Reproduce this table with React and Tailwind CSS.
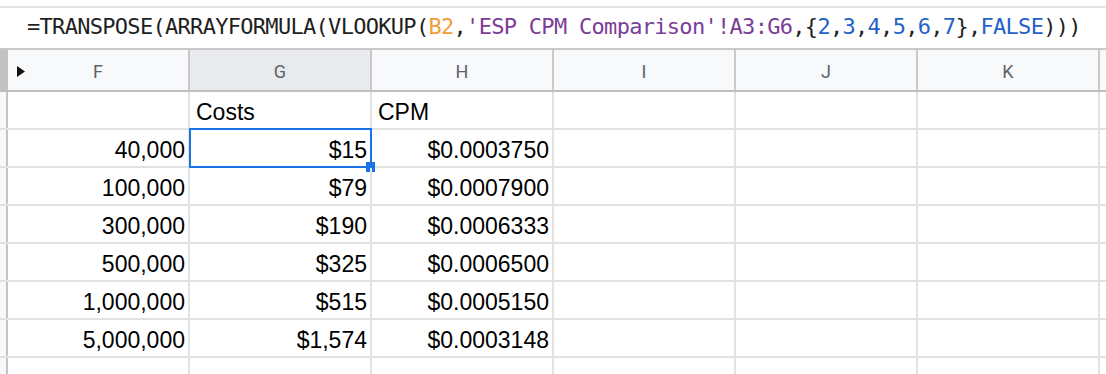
const cols = ["F", "G", "H", "I", "J", "K"];

const rows = [
  ["", "Costs", "CPM"],
  ["40,000", "$15", "$0.0003750"],
  ["100,000", "$79", "$0.0007900"],
  ["300,000", "$190", "$0.0006333"],
  ["500,000", "$325", "$0.0006500"],
  ["1,000,000", "$515", "$0.0005150"],
  ["5,000,000", "$1,574", "$0.0003148"],
  ["", "", ""]
];

// formula pieces: [text, color]
const formula = [
  ["=TRANSPOSE(ARRAYFORMULA(VLOOKUP(", "text-[#1f1f1f]"],
  ["B2", "text-[#f29d3b]"],
  [",", "text-[#1f1f1f]"],
  ["'ESP CPM Comparison'!A3:G6", "text-[#7b3d98]"],
  [",{", "text-[#1f1f1f]"],
  ["2", "text-[#2461c8]"],
  [",", "text-[#1f1f1f]"],
  ["3", "text-[#2461c8]"],
  [",", "text-[#1f1f1f]"],
  ["4", "text-[#2461c8]"],
  [",", "text-[#1f1f1f]"],
  ["5", "text-[#2461c8]"],
  [",", "text-[#1f1f1f]"],
  ["6", "text-[#2461c8]"],
  [",", "text-[#1f1f1f]"],
  ["7", "text-[#2461c8]"],
  ["},", "text-[#1f1f1f]"],
  ["FALSE", "text-[#2461c8]"],
  [")))", "text-[#1f1f1f]"]
];

function FormulaBar() {
  return (
    <div className="pt-[6px]">
      <div className="h-[2px] bg-[#e4e4e4]" />
      <div className="flex h-[40px] items-center whitespace-pre pb-[4px] pl-[27px] font-['DejaVu_Sans_Mono',monospace] text-[22px] tracking-[-0.7px]">
        {formula.map(([t, c], i) => (
          <span key={i} className={c}>{t}</span>
        ))}
      </div>
    </div>
  );
}

function HeaderRow() {
  return (
    <div className="flex h-[44px] border-t-2 border-b-2 border-t-[#c9c9c9] border-b-[#bfbfbf] bg-[#f8f9fa]">
      <div className="w-[8px] shrink-0 border-r-2 border-[#c4c4c4] bg-[#c2c2c2]" />
      {cols.map((c, i) => (
        <div
          key={c}
          className={`relative flex w-[182px] shrink-0 items-center justify-center border-r-2 border-[#c9c9c9] pt-[2px] font-['Roboto',sans-serif] text-[18px] text-[#5f6368] ${c === "G" ? "bg-[#e8eaed]" : ""}`}
        >
          {i === 0 && (
            <svg className="absolute left-[9px] top-[16px]" width="8" height="11" viewBox="0 0 8 11">
              <path d="M0 0 L8 5.5 L0 11 Z" fill="#111" />
            </svg>
          )}
          {c}
        </div>
      ))}
      <div className="flex-1" />
    </div>
  );
}

function Cell({ value, align, selected }) {
  return (
    <div
      className={`relative flex h-full w-[182px] shrink-0 items-end border-r-2 border-[#e2e2e2] px-[3px] pb-[3px] ${align === "left" ? "justify-start pl-[6px]" : "justify-end"}`}
    >
      {value}
      {selected && (
        <>
          <div className="pointer-events-none absolute -left-[1px] -top-[2px] -right-[2px] -bottom-[2px] border-[2.5px] border-[#1a73e8]" />
          <div className="absolute -right-[5px] -bottom-[6px] h-[10px] w-[9px] bg-[#1a73e8]" />
        </>
      )}
    </div>
  );
}

export default function App() {
  return (
    <div className="h-[374px] w-[1106px] overflow-hidden bg-white font-['Liberation_Sans',Arial,sans-serif] text-black">
      <FormulaBar />
      <HeaderRow />
      {rows.map((r, ri) => (
        <div key={ri} className="flex h-[38px] border-b-2 border-[#e2e2e2] text-[23px] leading-[26px]">
          <div className="h-full w-[8px] shrink-0 border-r-2 border-[#c4c4c4] bg-[#f8f9fa]" />
          <Cell value={r[0]} />
          <Cell value={r[1]} align={ri === 0 ? "left" : "right"} selected={ri === 1} />
          <Cell value={r[2]} align={ri === 0 ? "left" : "right"} />
          <Cell value="" />
          <Cell value="" />
          <Cell value="" />
          <div className="flex-1" />
        </div>
      ))}
    </div>
  );
}
